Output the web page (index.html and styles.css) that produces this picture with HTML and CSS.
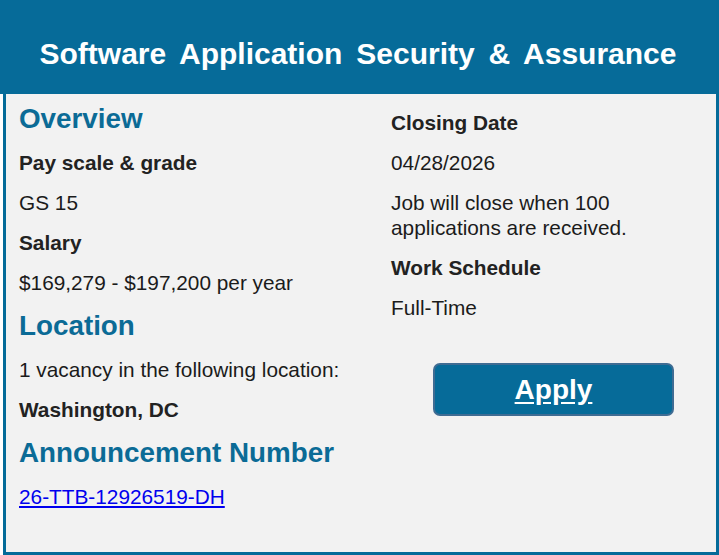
FILE: index.html
```html
<!DOCTYPE html>
<html lang="en">
<head>
<meta charset="utf-8">
<title>Software Application Security &amp; Assurance</title>
<link rel="stylesheet" href="styles.css">
</head>
<body>
<div class="card">
  <header class="card-header">
    <h1 class="title">Software Application Security &amp; Assurance</h1>
  </header>
  <div class="card-body">
    <div class="col col-left">
      <h2 class="heading">Overview</h2>
      <p class="label">Pay scale &amp; grade</p>
      <p class="text">GS 15</p>
      <p class="label">Salary</p>
      <p class="text">$169,279 - $197,200 per year</p>
      <h2 class="heading">Location</h2>
      <p class="text">1 vacancy in the following location:</p>
      <p class="label">Washington, DC</p>
      <h2 class="heading">Announcement Number</h2>
      <p class="text"><a class="link" href="#">26-TTB-12926519-DH</a></p>
    </div>
    <div class="col col-right">
      <p class="label">Closing Date</p>
      <p class="text">04/28/2026</p>
      <p class="text">Job will close when 100<br>applications are received.</p>
      <p class="label">Work Schedule</p>
      <p class="text">Full-Time</p>
      <div class="apply-wrap">
        <a class="apply" href="#">Apply</a>
      </div>
    </div>
  </div>
</div>
</body>
</html>
```
FILE: styles.css
```css
html, body {
  margin: 0;
  padding: 0;
  background: #ffffff;
}

body {
  font-family: "Liberation Sans", Arial, sans-serif;
  color: #1b1b1b;
}

.card {
  box-sizing: border-box;
  margin-left: 3px;
  width: 716px;
  height: 555px;
  border: 3px solid #046b99;
  border-top: none;
  background: #f2f2f2;
  display: flex;
  flex-direction: column;
}

.card-header {
  margin-left: -6px;
  width: 716px;
  height: 94px;
  box-sizing: border-box;
  padding-top: 36px;
  background: #066b99;
  flex: none;
}

.title {
  margin: 0;
  font-size: 30px;
  line-height: 36px;
  font-weight: bold;
  color: #ffffff;
  text-align: center;
  word-spacing: 5.6px;
}

.card-body {
  display: grid;
  grid-template-columns: 372px 1fr;
  padding-left: 13px;
  padding-top: 9px;
}

.col {
  display: flex;
  flex-direction: column;
  gap: 15px;
}

.col-right {
  padding-top: 7px;
}

.heading {
  margin: 0;
  font-size: 27.8px;
  line-height: 32px;
  font-weight: bold;
  color: #0b6b96;
}

.label,
.text {
  margin: 0;
  font-size: 20.8px;
  line-height: 25px;
}

.label {
  font-weight: bold;
  color: #222222;
}

.text {
  color: #1b1b1b;
}

.link {
  color: #0000ee;
  text-decoration: underline;
}

.apply-wrap {
  display: flex;
  justify-content: center;
  margin-top: 28px;
}

.apply {
  box-sizing: border-box;
  width: 241px;
  height: 53px;
  display: flex;
  align-items: center;
  justify-content: center;
  background: #066b99;
  border: 2px solid #3f6c93;
  border-radius: 7px;
  color: #ffffff;
  font-size: 28px;
  font-weight: bold;
  text-decoration: underline;
  text-underline-offset: 3px;
}
```
